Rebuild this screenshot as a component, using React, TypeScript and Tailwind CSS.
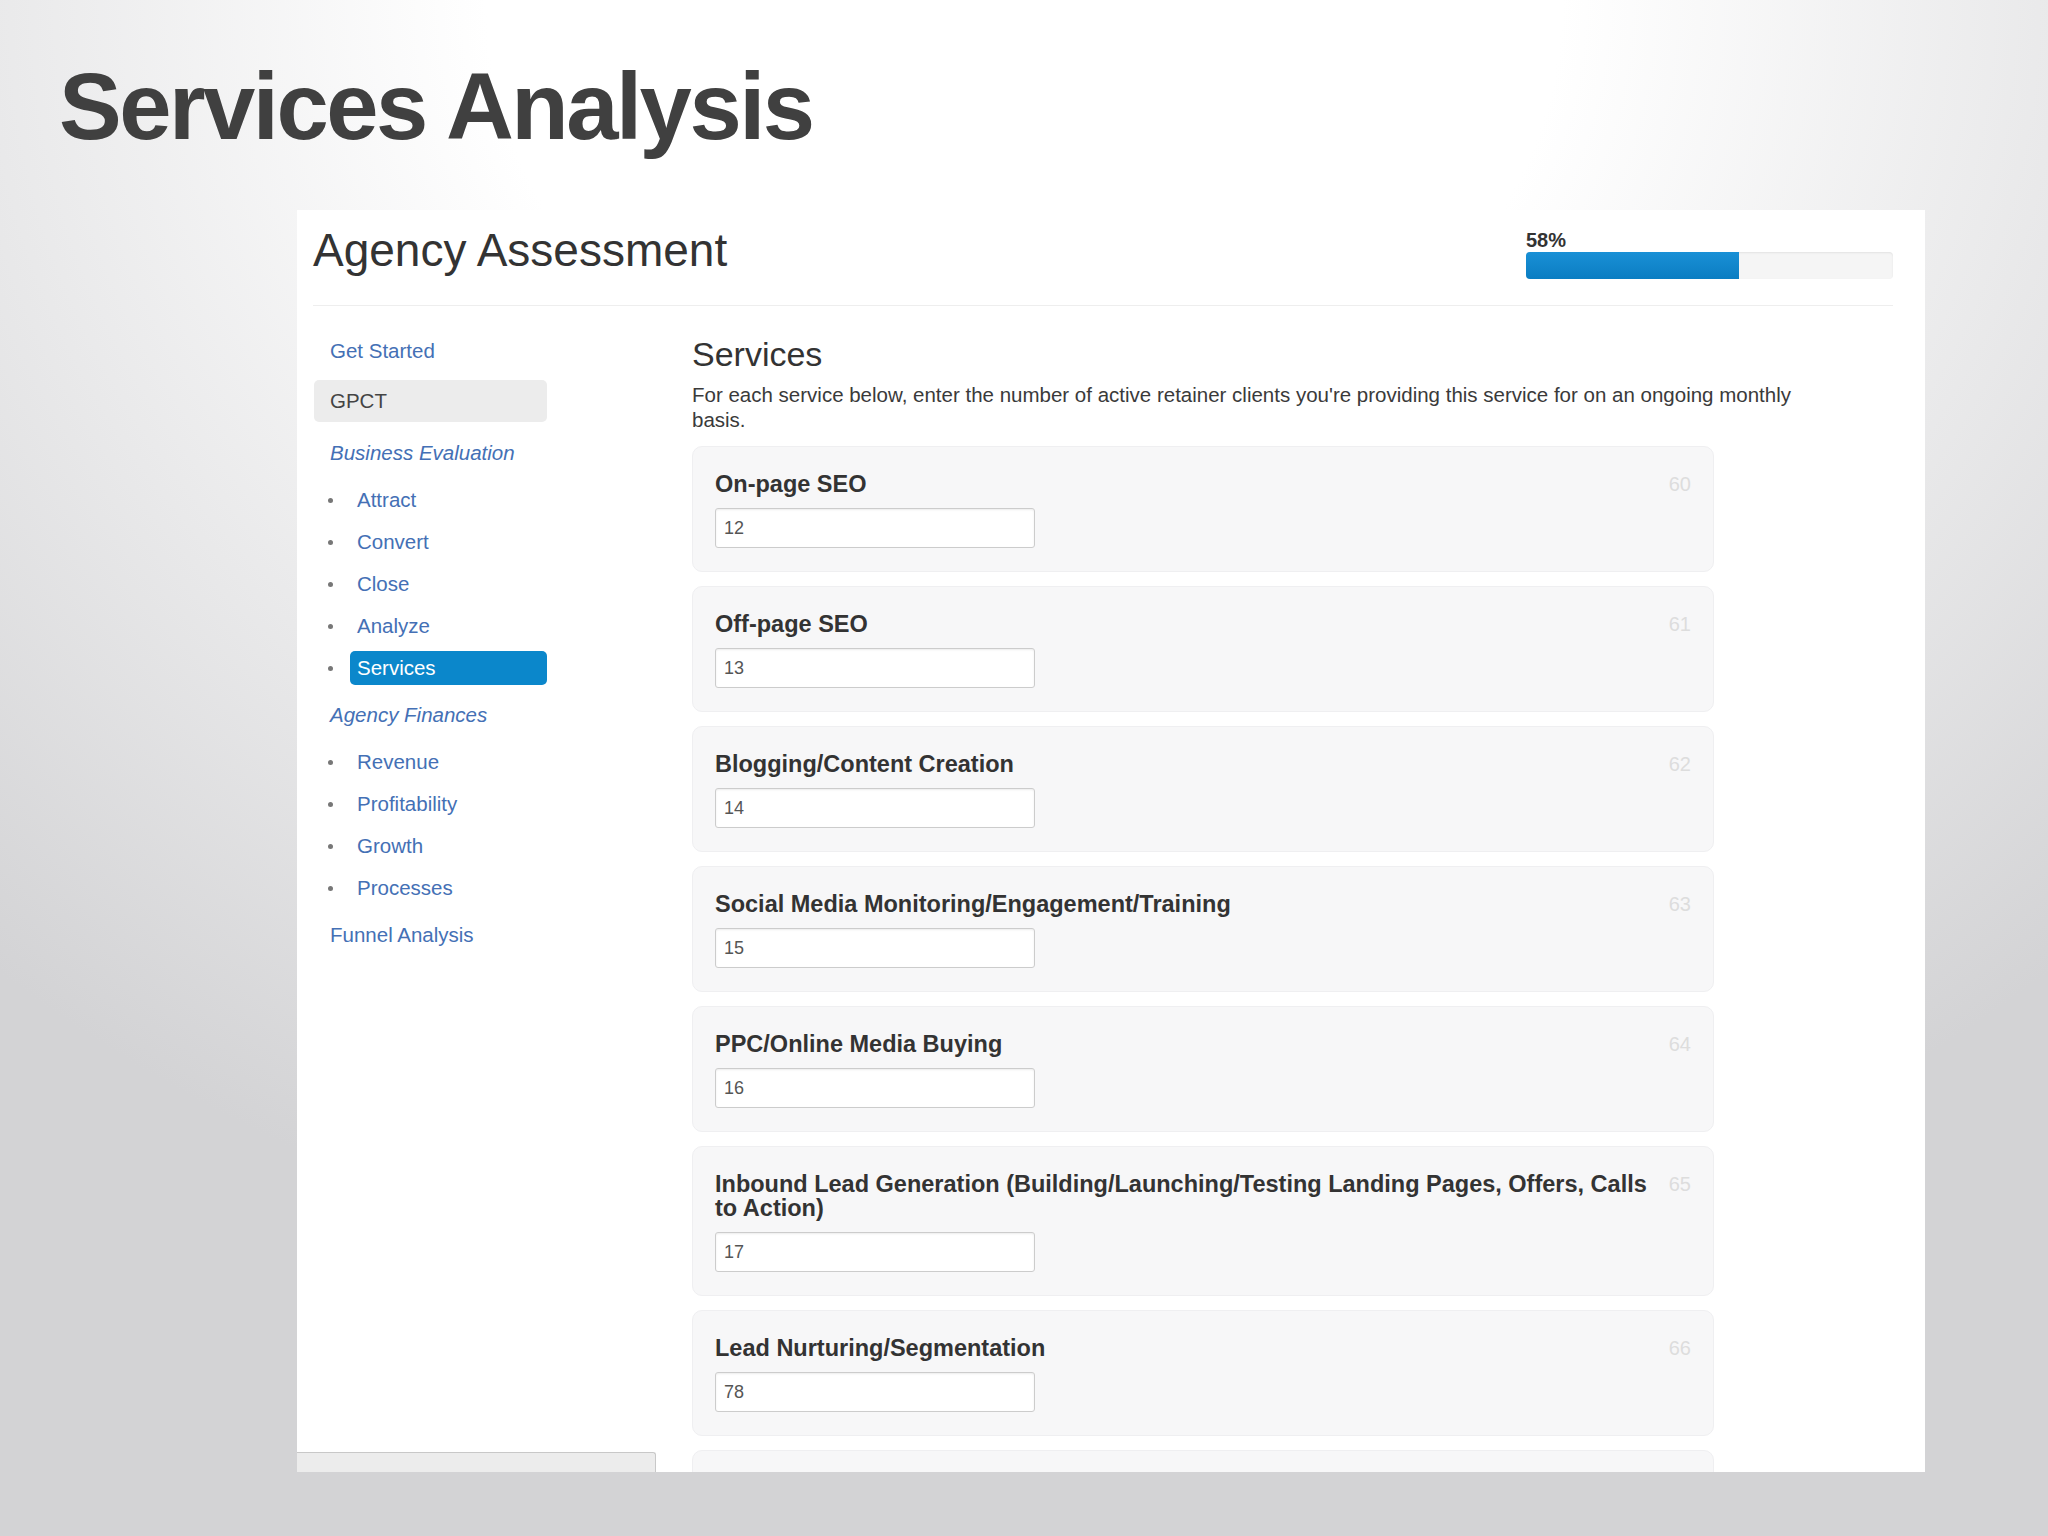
import React from 'react';

type Service = {
    label: string[];
    value: string;
    num: string;
};

const services: Service[] = [
    { label: ['On-page SEO'], value: '12', num: '60' },
    { label: ['Off-page SEO'], value: '13', num: '61' },
    { label: ['Blogging/Content Creation'], value: '14', num: '62' },
    { label: ['Social Media Monitoring/Engagement/Training'], value: '15', num: '63' },
    { label: ['PPC/Online Media Buying'], value: '16', num: '64' },
    {
        label: ['Inbound Lead Generation (Building/Launching/Testing Landing Pages, Offers, Calls', 'to Action)'],
        value: '17',
        num: '65',
    },
    { label: ['Lead Nurturing/Segmentation'], value: '78', num: '66' },
];

const groups = [
    { title: 'Business Evaluation', items: ['Attract', 'Convert', 'Close', 'Analyze', 'Services'] },
    { title: 'Agency Finances', items: ['Revenue', 'Profitability', 'Growth', 'Processes'] },
];

function NavList({ items, active }: { items: string[]; active?: string }) {
    return (
        <ul className="mt-[5px]">
            {items.map((item) => (
                <li key={item} className="h-[42px] flex items-center">
                    <span className="ml-[14px] w-[5px] h-[5px] rounded-full bg-[#777777] shrink-0" />
                    <span
                        className={
                            item === active
                                ? 'ml-[17px] flex-1 h-[34px] flex items-center pl-[7px] rounded-[5px] bg-[#0b87cb] text-white'
                                : 'ml-[17px] flex-1 h-[34px] flex items-center pl-[7px] text-[#4470b5]'
                        }
                    >
                        {item}
                    </span>
                </li>
            ))}
        </ul>
    );
}

function Sidebar() {
    return (
        <nav className="ml-[17px] w-[233px] pt-[24px] text-[20.5px] shrink-0">
            <div className="h-[42px] flex items-center px-[16px] text-[#4470b5]">Get Started</div>
            <div className="mt-[8px] h-[42px] flex items-center px-[16px] rounded-[5px] bg-[#ececec] text-[#444444]">GPCT</div>
            {groups.map((g, i) => (
                <div key={g.title}>
                    <div className={i === 0 ? 'mt-[10px] h-[42px] flex items-center px-[16px] italic text-[#4470b5]' : 'mt-[5px] h-[42px] flex items-center px-[16px] italic text-[#4470b5]'}>
                        {g.title}
                    </div>
                    <NavList items={g.items} active="Services" />
                </div>
            ))}
            <div className="mt-[5px] h-[42px] flex items-center px-[16px] text-[#4470b5]">Funnel Analysis</div>
        </nav>
    );
}

function ServiceCard({ s }: { s: Service }) {
    return (
        <div className="w-[1022px] rounded-[10px] bg-[#f7f7f8] border border-[#efeff1] pt-[25px] pb-[23px] pl-[22px] pr-[22px] flex">
            <div className="flex-1">
                <div className="text-[23.5px] leading-[24px] font-bold text-[#333333] whitespace-nowrap">
                    {s.label.map((l, i) => (
                        <div key={i}>{l}</div>
                    ))}
                </div>
                <input
                    readOnly
                    value={s.value}
                    className="block mt-[12px] w-[320px] h-[40px] border border-[#cccccc] rounded-[3px] bg-white shadow-[inset_0_1px_2px_rgba(0,0,0,0.08)] px-[8px] text-[18px] text-[#555555] outline-none"
                />
            </div>
            <div className="text-[20px] leading-[24px] text-[#dddddd]">{s.num}</div>
        </div>
    );
}

export default function App() {
    return (
        <div className="w-[2048px] h-[1536px] overflow-hidden font-['Liberation_Sans',Arial,sans-serif] bg-[radial-gradient(ellipse_75%_85%_at_50%_0%,#ffffff_35%,#d3d3d5_100%)]">
            <h1 className="pt-[60px] pl-[59px] text-[94px] leading-[94px] font-bold tracking-[-2.5px] text-[#404040]">
                Services Analysis
            </h1>

            <div className="relative ml-[297px] mt-[56px] w-[1628px] h-[1262px] bg-white overflow-hidden">
                <header className="ml-[16px] mr-[32px] h-[96px] border-b border-[#eeeeee] pt-[17px] flex justify-between items-start">
                    <h2 className="text-[46px] leading-[46px] text-[#333333]">Agency Assessment</h2>
                    <div className="w-[367px] pt-[3px]">
                        <div className="text-[20px] leading-[20px] font-bold text-[#333333]">58%</div>
                        <div className="mt-[2px] h-[27px] rounded-[4px] bg-[#f5f5f5] shadow-[inset_0_1px_2px_rgba(0,0,0,0.08)] overflow-hidden">
                            <div className="h-full bg-gradient-to-b from-[#1990d6] to-[#0a7dc2]" style={{ width: '58%' }} />
                        </div>
                    </div>
                </header>

                <div className="flex">
                    <Sidebar />
                    <main className="ml-[145px] pt-[31px]">
                        <h3 className="text-[34px] leading-[34px] text-[#333333]">Services</h3>
                        <p className="mt-[11px] text-[20.5px] leading-[25px] text-[#3a3a3a] whitespace-nowrap">
                            For each service below, enter the number of active retainer clients you&apos;re providing this service for on an ongoing monthly
                            <br />
                            basis.
                        </p>
                        <div className="mt-[14px] flex flex-col gap-[14px]">
                            {services.map((s) => (
                                <ServiceCard key={s.num} s={s} />
                            ))}
                            {/* next card, cut off by the bottom of the screenshot */}
                            <div className="w-[1022px] h-[126px] rounded-[10px] bg-[#f7f7f8] border border-[#efeff1]" />
                        </div>
                    </main>
                </div>

                <div className="absolute bottom-0 left-0 w-[359px] h-[20px] bg-[#ececec] border-t border-r border-[#c8c8c8] rounded-tr-[3px]" />
            </div>
        </div>
    );
}
